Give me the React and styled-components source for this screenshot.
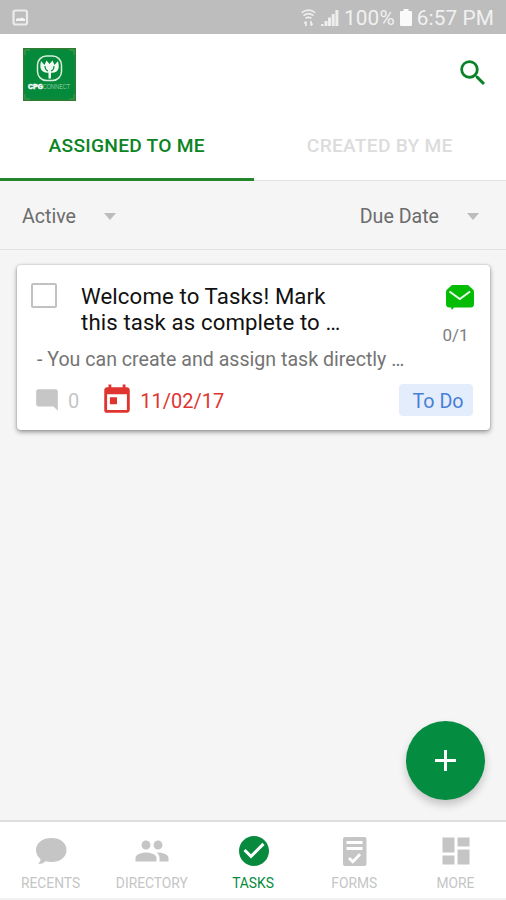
import React from 'react';
import styled, { createGlobalStyle } from 'styled-components';
import {
  MdSearch,
  MdToday,
  MdModeComment,
  MdPeople,
  MdCheckCircle,
  MdDashboard
} from 'react-icons/md';

const GlobalStyle = createGlobalStyle`
  * {
    box-sizing: border-box;
  }

  body {
    margin: 0;
    font-family: Roboto, 'Liberation Sans', sans-serif;
    background: #f5f5f5;
  }
`;

const Screen = styled.div`
  display: flex;
  flex-direction: column;
  position: relative;
  width: 506px;
  height: 900px;
  overflow: hidden;
  background: #f5f5f5;
`;

const StatusBar = styled.div`
  display: flex;
  align-items: center;
  flex: none;
  height: 34px;
  padding: 1px 12px 0;
  background: #bdbdbd;
  color: #f1f1f1;
  font-size: 20.8px;
  line-height: 34px;

  svg {
    display: block;
    flex: none;
  }
`;

const StatusIcons = styled.div`
  display: flex;
  align-items: center;
  gap: 5px;
  margin-left: auto;
`;

const StatusText = styled.span`
  margin-right: ${props => props.$right || 0};
  letter-spacing: 0.1px;
`;

const Header = styled.header`
  display: flex;
  align-items: flex-start;
  justify-content: space-between;
  flex: none;
  height: 77px;
  padding: 14px 16px 0 23px;
  background: #fff;
`;

const Logo = styled.svg`
  display: block;
  width: 53px;
  height: 53px;
`;

const SearchButton = styled.button`
  margin: 8px 0 0;
  padding: 0;
  border: 0;
  background: none;
  color: #0a8228;
  font-size: 34px;

  svg {
    display: block;
  }
`;

const Tabs = styled.nav`
  display: flex;
  flex: none;
  height: 70px;
  background: #fff;
`;

const Tab = styled.div`
  flex: 1 0 ${props => (props.$active ? '1px' : '0')};
  height: 70px;
  padding-top: 23px;
  border-bottom: ${props => (props.$active ? '3px solid #23862a' : '1px solid #e2e2e2')};
  color: ${props => (props.$active ? '#0b8424' : '#dcdcdc')};
  font-size: 19.2px;
  font-weight: 500;
  line-height: 24px;
  letter-spacing: 0.25px;
  text-align: center;
  white-space: nowrap;
`;

const Filters = styled.div`
  display: flex;
  align-items: center;
  justify-content: space-between;
  flex: none;
  height: 69px;
  padding: 4px 27px 0 22px;
  border-bottom: 1px solid #e2e2e2;
`;

const Select = styled.div`
  display: flex;
  align-items: center;
  color: #6c6c6c;
  font-size: 19.6px;
  line-height: 24px;
`;

const Caret = styled.span`
  margin-left: 28px;
  margin-bottom: 2px;
  border: 6.5px solid transparent;
  border-top: 7px solid #bcbcbc;
  border-bottom: 0;
`;

const Card = styled.article`
  flex: none;
  height: 165px;
  margin: 15px 16px 0 17px;
  padding: 18px 17px 0 14px;
  border-radius: 4px;
  background: #fff;
  box-shadow: 0 2px 5px rgba(0, 0, 0, 0.4), 0 0 2px rgba(0, 0, 0, 0.2);
`;

const CardTop = styled.div`
  display: flex;
  height: 62px;
`;

const Checkbox = styled.span`
  flex: none;
  width: 26px;
  height: 25px;
  border: 2px solid #c1c1c1;
  border-radius: 2px;
`;

const Title = styled.h2`
  width: 300px;
  margin: 0 0 0 24px;
  color: #111;
  font-size: 22.2px;
  font-weight: 400;
  line-height: 26px;
  letter-spacing: 0.12px;
`;

const ReadState = styled.div`
  display: flex;
  flex-direction: column;
  align-items: center;
  width: 40px;
  margin-left: auto;
  color: #7e7e7e;
  font-size: 17px;
  line-height: 20px;

  svg {
    display: block;
    margin: 2px 0 14px 13px;
  }

  span {
    margin-left: 5px;
  }
`;

const Description = styled.p`
  margin: 3px 0 0 6px;
  color: #747474;
  font-size: 19.6px;
  line-height: 24px;
  white-space: nowrap;
`;

const CardBottom = styled.div`
  display: flex;
  align-items: center;
  height: 32px;
  margin-top: 12px;
`;

const Meta = styled.div`
  display: flex;
  align-items: center;
  margin-left: ${props => props.$left};
  color: ${props => props.$color};
  font-size: 20px;
  line-height: 34px;

  svg {
    display: block;
    flex: none;
    margin-right: ${props => props.$gap};
  }
`;

const MetaText = styled.span`
  padding-top: 1px;
`;

const Status = styled.span`
  width: 74px;
  height: 32px;
  margin-left: auto;
  padding-left: 4px;
  border-radius: 4px;
  background: #e4edfb;
  color: #477fd8;
  font-size: 19.7px;
  line-height: 35px;
  text-align: center;
`;

const AddButton = styled.button`
  display: flex;
  align-items: center;
  justify-content: center;
  position: absolute;
  right: 21.5px;
  bottom: 100.5px;
  width: 79px;
  height: 79px;
  padding: 0;
  border: 0;
  border-radius: 50%;
  background: #048c40;
  box-shadow: 0 5px 9px rgba(0, 0, 0, 0.2);
`;

const BottomNav = styled.nav`
  display: flex;
  flex: none;
  height: 80px;
  margin-top: auto;
  border-top: 2px solid #dedede;
  border-bottom: 2px solid #f2f2f2;
  background: #fff;
`;

const NavItem = styled.div`
  display: flex;
  flex: 1;
  flex-direction: column;
  align-items: center;
  padding-top: 11px;
  color: ${props => (props.$active ? '#078a3e' : '#c5c5c5')};
  font-size: 13.8px;
  line-height: 18px;

  svg {
    display: block;
    width: 36px;
    height: 36px;
    margin: 0 0 5px 1px;
  }
`;

const PictureIcon = () => (
  <svg width="17" height="18" viewBox="0 0 17 18">
    <rect x="1.5" y="1.5" width="13.5" height="14" rx="2" fill="none" stroke="#ececec" strokeWidth="2.2" />
    <path d="M4 12V10l2-1 1.5.5L10 8.5l3 1.5V12z" fill="#f4f4f4" />
  </svg>
);

const WifiIcon = () => (
  <svg width="15" height="18" viewBox="0 0 15 18" fill="none" stroke="#eeeeee" strokeWidth="1.7">
    <path d="M.7 3.6Q7.5-1.4 14.3 3.6M2.500 6.600q5-3.800 10 0M4.600 9.400q2.900-2.200 5.800 0" />
    <path d="M5 17v-4.500M3.400 14.500L5 12.500M10 12v4.500M11.600 14.500L10 16.500" />
  </svg>
);

const SignalIcon = () => (
  <svg width="18" height="18" viewBox="0 0 18 18" fill="#eeeeee">
    <path d="M0 15h2.500v2H0zM3.500 12H6.500v5H3.500zM7 8.500h3V17H7zM10.700 5h3v12h-3zM14.400 1h3v16h-3z" />
  </svg>
);

const BatteryIcon = () => (
  <svg width="12" height="18" viewBox="0 0 12 18" fill="#fafafa">
    <path d="M3.500 0h5v2H11q1 0 1 1v13q0 1-1 1H1q-1 0-1-1V3q0-1 1-1h2.500z" />
  </svg>
);

const BrandLogo = () => (
  <Logo viewBox="0 0 53 53">
    <rect width="53" height="53" fill="#2f7d32" />
    <rect x="1.5" y="1.5" width="50" height="50" fill="#058a3c" />
    <path d="M2 7V2h5M46 2h5v5M51 46v5h-5M7 51H2v-5" fill="none" stroke="#4f9a4c" />
    <rect x="14.5" y="8" width="24" height="24.5" rx="9" fill="none" stroke="#d8efdc" strokeWidth="1.5" />
    <path
      d="M18 13l3.500 4 2-4.500 3 3.500 3-3.500 2 4.500 3.500-4q2 8-1.500 10.500-2.500 1.500-5.500 1.200v5.800h-2.500v-5.800q-3 .3-5.500-1.200Q16 21 18 13z"
      fill="#f2fbf3"
    />
    <path d="M22 18q0 4 3 5M31 18q0 4-3 5" fill="none" stroke="#058a3c" strokeWidth="1.2" />
    <text x="5" y="41" fill="#fff" stroke="#fff" strokeWidth=".3" fontSize="6.8" fontWeight="900" textLength="15" lengthAdjust="spacingAndGlyphs">CPG</text>
    <text x="20" y="41" fill="#b4dcbd" fontSize="6.4" fontWeight="300" textLength="27" lengthAdjust="spacingAndGlyphs">CONNECT</text>
  </Logo>
);

const MailIcon = () => (
  <svg width="28" height="26" viewBox="0 0 28 26">
    <path
      d="M6 0h16l5 4.500q1 1 1 2.500v12q0 3.500-3.500 3.500H8L5.800 25 5 22.500H3.500Q0 22.500 0 19V7q0-1.500 1-2.500z"
      fill="#05bc05"
    />
    <path d="M3.500 6.500l10.300 7.500 10.300-7.500" fill="none" stroke="#e9fbe9" strokeWidth="2" />
  </svg>
);

const ChatIcon = () => (
  <svg viewBox="0 0 36 36" fill="currentColor">
    <path d="M18.500 5C27 5 33.500 9.500 33.500 17S27 29 18.500 29c-2 0-4-.2-5.800-.8-2 1.800-4.500 2.900-7.700 2.600 2.100-1.600 2.700-3.300 2.500-4.700C4.800 23.900 3 20.800 3 17 3 9.500 10 5 18.500 5z" />
  </svg>
);

const FormIcon = () => (
  <svg viewBox="0 0 36 36">
    <rect x="6" y="4" width="23.500" height="29" rx="2" fill="currentColor" />
    <path d="M9.500 9.500h16M9.500 15.500h16" stroke="#fff" strokeWidth="2.800" />
    <path d="M12 25l3.800 3.800 7.200-7.600" fill="none" stroke="#fff" strokeWidth="2.800" />
  </svg>
);

const navItems = [
  { label: 'RECENTS', icon: <ChatIcon /> },
  { label: 'DIRECTORY', icon: <MdPeople /> },
  { label: 'TASKS', icon: <MdCheckCircle />, active: true },
  { label: 'FORMS', icon: <FormIcon /> },
  { label: 'MORE', icon: <MdDashboard /> }
];

const TaskCard = () => (
  <Card>
    <CardTop>
      <Checkbox />
      <Title>
        Welcome to Tasks! Mark
        <br />
        this task as complete to …
      </Title>
      <ReadState>
        <MailIcon />
        <span>0/1</span>
      </ReadState>
    </CardTop>
    <Description>- You can create and assign task directly …</Description>
    <CardBottom>
      <Meta $left="3px" $color="#c6c6c6" $gap="8px">
        <MdModeComment size={26} />
        <MetaText>0</MetaText>
      </Meta>
      <Meta $left="21px" $color="#e03431" $gap="6px">
        <MdToday size={34} />
        <MetaText>11/02/17</MetaText>
      </Meta>
      <Status>To Do</Status>
    </CardBottom>
  </Card>
);

const App = () => (
  <Screen>
    <GlobalStyle />
    <StatusBar>
      <PictureIcon />
      <StatusIcons>
        <WifiIcon />
        <SignalIcon />
        <StatusText>100%</StatusText>
        <BatteryIcon />
        <StatusText>6:57 PM</StatusText>
      </StatusIcons>
    </StatusBar>
    <Header>
      <BrandLogo />
      <SearchButton aria-label="Search">
        <MdSearch />
      </SearchButton>
    </Header>
    <Tabs>
      <Tab $active>ASSIGNED TO ME</Tab>
      <Tab>CREATED BY ME</Tab>
    </Tabs>
    <Filters>
      <Select>
        Active
        <Caret />
      </Select>
      <Select>
        Due Date
        <Caret />
      </Select>
    </Filters>
    <TaskCard />
    <AddButton aria-label="Add task">
      <svg width="21" height="21" viewBox="0 0 21 21">
        <path d="M10.5 0v21M0 10.5h21" stroke="#fff" strokeWidth="3" />
      </svg>
    </AddButton>
    <BottomNav>
      {navItems.map(item => (
        <NavItem key={item.label} $active={item.active}>
          {item.icon}
          {item.label}
        </NavItem>
      ))}
    </BottomNav>
  </Screen>
);

export default App;
